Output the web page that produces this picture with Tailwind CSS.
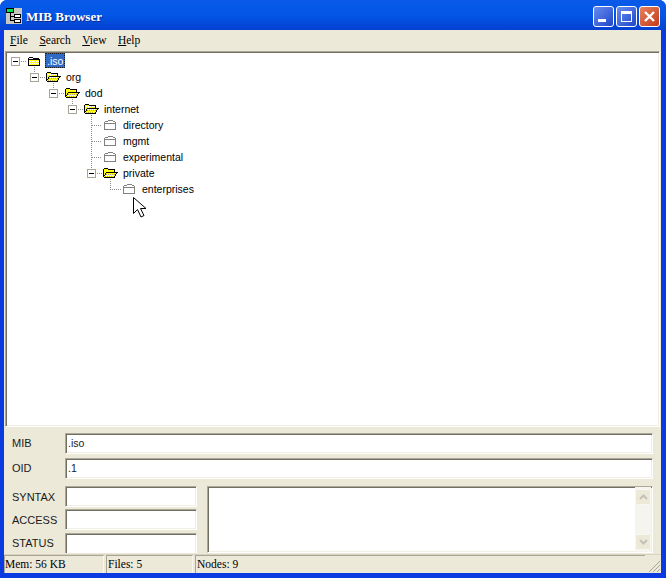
<!DOCTYPE html>
<html>
<head>
<meta charset="utf-8">
<script src="https://cdn.jsdelivr.net/npm/@tailwindcss/browser@4"></script>
</head>
<body class="bg-white">
<svg width="0" height="0" class="absolute">
  <defs>
    <symbol id="open" viewBox="0 0 15 11">
      <g shape-rendering="crispEdges">
        <path d="M1 1H5V2H12V4H1ZM1 4H14L11 9H1Z" fill="#ffff00"/>
        <g stroke="#fff" stroke-dasharray="1 1" fill="none">
          <path d="M2 2.5H11M3 4.5H14"/>
          <path d="M3 3.5H5M3 5.5H12M2 7.5H10" stroke-dashoffset="1"/>
          <path d="M3 6.5H12M2 8.5H10" stroke="#b8b050"/>
        </g>
        <path d="M.5 9V1.5L1.5 .5H4.5L5.5 1.5H11.5V3.5M.5 9.5H11L14 4.5H3.5L.5 9" fill="none" stroke="#000"/>
      </g>
    </symbol>
    <symbol id="closed" viewBox="0 0 12 9">
      <g shape-rendering="crispEdges">
        <rect x="1" y="2" width="10" height="6" fill="#ffff00"/>
        <g stroke="#fff" stroke-dasharray="1 1" fill="none">
          <path d="M1 3.5H11M1 5.5H11M1 7.5H11"/>
          <path d="M2 2.5H11M2 4.5H11M2 6.5H11"/>
        </g>
        <path d="M.5 8.5V1.5L1.5 .5H4.5L5.5 1.5H10.5L11.5 2.5V8.5ZM1 2.5H11" fill="none" stroke="#000"/>
      </g>
    </symbol>
    <symbol id="leaf" viewBox="0 0 12 11">
      <path d="M.5 9.5V2.5L1.5 1.5H3.5L4.5 .5H8.5L9.5 1.5H10.5L11.5 2.5V9.5ZM1 3.5H11" fill="#fff" stroke="#808080" shape-rendering="crispEdges"/>
    </symbol>
    <symbol id="minus" viewBox="0 0 9 9">
      <rect x=".5" y=".5" width="8" height="8" fill="#fff" stroke="#a8a498" shape-rendering="crispEdges"/>
      <path d="M2 4.5H7" stroke="#000" shape-rendering="crispEdges"/>
    </symbol>
  </defs>
</svg>

<div class="w-[666px] h-[578px] flex flex-col overflow-hidden rounded-t-[7px] bg-[#0a3be0] font-['Liberation_Sans',sans-serif] text-[11px] text-black">
  <!-- Title bar -->
  <div class="h-[30px] shrink-0 flex items-center pl-[6px] pr-[6px] bg-linear-to-b from-[#0a5ae8] via-[#0256e6] to-[#0440d0]">
    <svg width="16" height="16" viewBox="0 0 16 16" shape-rendering="crispEdges" class="mr-[4px] mt-[2px]">
      <rect width="16" height="16" fill="#c8c8c0"/>
      <rect x=".5" y=".5" width="7" height="4" fill="#00e050" stroke="#000"/>
      <path d="M4.5 5V12.5H8M4.5 8.5H8" stroke="#000" fill="none"/>
      <rect x="8.5" y="6.5" width="6" height="3" fill="#fff" stroke="#000"/>
      <rect x="8.5" y="11.5" width="6" height="3" fill="#fff" stroke="#000"/>
    </svg>
    <span class="font-['Liberation_Serif',serif] font-bold text-[13px] text-white mt-[3px] [text-shadow:1px_1px_0_#0a2a90]">MIB Browser</span>
    <div class="ml-auto flex gap-[2px] mt-[2px]">
      <div class="w-[21px] h-[21px] rounded-[3px] border border-white bg-linear-to-br from-[#6a8cf0] to-[#1f45c8] flex items-end pl-[4px] pb-[4px]">
        <div class="w-[8px] h-[3px] bg-white"></div>
      </div>
      <div class="w-[21px] h-[21px] rounded-[3px] border border-white bg-linear-to-br from-[#6a8cf0] to-[#1f45c8] flex items-center justify-center">
        <div class="w-[11px] h-[11px] border border-white border-t-[3px]"></div>
      </div>
      <div class="w-[21px] h-[21px] rounded-[3px] border border-white bg-linear-to-br from-[#e8805c] to-[#c03a18] flex items-center justify-center">
        <svg width="13" height="13" viewBox="0 0 13 13"><path d="M2 2L11 11M11 2L2 11" stroke="#fff" stroke-width="2.4"/></svg>
      </div>
    </div>
  </div>

  <div class="flex-1 min-h-0 ml-[4px] mb-[5px] mr-[5px] bg-[#ece9d8] flex flex-col">
    <!-- Menu -->
    <div class="h-[21px] shrink-0 flex items-center pl-[6px] gap-[11.5px] font-['Liberation_Serif',serif] text-[11.5px]">
      <span><u>F</u>ile</span>
      <span><u>S</u>earch</span>
      <span><u>V</u>iew</span>
      <span><u>H</u>elp</span>
    </div>

    <!-- Tree -->
    <div class="relative h-[376px] shrink-0 mx-px pl-px pt-[2px] bg-white border border-t-[#aca899] border-l-[#aca899] border-r-white border-b-white shadow-[inset_1px_1px_0_#716f64,inset_-1px_-1px_0_#f1efe2] text-[10.5px] leading-[15px]">
      <svg class="absolute left-[-6px] top-[-52px]" width="200" height="200" fill="none" stroke="#8c8c8c" stroke-dasharray="1 1" shape-rendering="crispEdges">
        <path d="M20.5 61.5H27M39.5 77.5H46M58.5 93.5H65M77.5 109.5H84M96.5 173.5H103"/>
        <path d="M34.5 67V72M53.5 83V88M72.5 99V104M91.5 115V168"/>
        <path d="M91.5 125.5H102M91.5 141.5H102M91.5 157.5H102"/>
        <path d="M110.5 179V189.5H121"/>
      </svg>
      <div class="relative flex items-center h-[15px] mb-px ml-[4px]">
        <svg width="9" height="9"><use href="#minus"/></svg>
        <svg width="12" height="9" class="ml-[8px]"><use href="#closed"/></svg>
        <span class="ml-[5px] px-[2px] self-start -mt-px h-[15px] leading-[16px] bg-[#316ac5] text-white outline-1 outline-dotted outline-[#1a1a1a] -outline-offset-1">.iso</span>
      </div>
      <div class="relative flex items-center h-[15px] mb-px ml-[23px]">
        <svg width="9" height="9"><use href="#minus"/></svg>
        <svg width="15" height="11" class="ml-[7px]"><use href="#open"/></svg>
        <span class="ml-[5px]">org</span>
      </div>
      <div class="relative flex items-center h-[15px] mb-px ml-[42px]">
        <svg width="9" height="9"><use href="#minus"/></svg>
        <svg width="15" height="11" class="ml-[7px]"><use href="#open"/></svg>
        <span class="ml-[5px]">dod</span>
      </div>
      <div class="relative flex items-center h-[15px] mb-px ml-[61px]">
        <svg width="9" height="9"><use href="#minus"/></svg>
        <svg width="15" height="11" class="ml-[7px]"><use href="#open"/></svg>
        <span class="ml-[5px]">internet</span>
      </div>
      <div class="relative flex items-center h-[15px] mb-px ml-[97px]">
        <svg width="12" height="11"><use href="#leaf"/></svg>
        <span class="ml-[7px]">directory</span>
      </div>
      <div class="relative flex items-center h-[15px] mb-px ml-[97px]">
        <svg width="12" height="11"><use href="#leaf"/></svg>
        <span class="ml-[7px]">mgmt</span>
      </div>
      <div class="relative flex items-center h-[15px] mb-px ml-[97px]">
        <svg width="12" height="11"><use href="#leaf"/></svg>
        <span class="ml-[7px]">experimental</span>
      </div>
      <div class="relative flex items-center h-[15px] mb-px ml-[80px]">
        <svg width="9" height="9"><use href="#minus"/></svg>
        <svg width="15" height="11" class="ml-[7px]"><use href="#open"/></svg>
        <span class="ml-[5px]">private</span>
      </div>
      <div class="relative flex items-center h-[15px] mb-px ml-[116px]">
        <svg width="12" height="11"><use href="#leaf"/></svg>
        <span class="ml-[7px]">enterprises</span>
      </div>
      <!-- mouse pointer -->
      <svg class="absolute left-[126px] top-[144px]" width="16" height="23" viewBox="0 0 16 23">
        <path d="M1.5 1.5V17.5L5.5 13.5L9 21L12 19.5L8.5 12.5H14Z" fill="#fff" stroke="#000" stroke-linejoin="round"/>
      </svg>
    </div>

    <!-- Fields -->
    <div class="flex-1 min-h-0 flex flex-col pl-[8px] pr-[8px] pt-[5px] text-[11px] text-[#1a1a1a]">
      <div class="flex items-center h-[22px]">
        <span class="w-[53px] pt-px">MIB</span>
        <div class="flex-1 h-[21px] bg-white border border-t-[#aca899] border-l-[#aca899] border-r-white border-b-white shadow-[inset_1px_1px_0_#716f64,inset_-1px_-1px_0_#f1efe2] pl-[2px] leading-[18px] text-[10.5px]">.iso</div>
      </div>
      <div class="flex items-center h-[22px] mt-[3px]">
        <span class="w-[53px] pt-px">OID</span>
        <div class="flex-1 h-[21px] bg-white border border-t-[#aca899] border-l-[#aca899] border-r-white border-b-white shadow-[inset_1px_1px_0_#716f64,inset_-1px_-1px_0_#f1efe2] pl-[2px] leading-[18px] text-[10.5px]">.1</div>
      </div>
      <div class="flex mt-[7px] gap-[10px]">
        <div class="w-[185px] flex flex-col gap-[2px]">
          <div class="flex items-center h-[21px]">
            <span class="w-[53px] pt-px">SYNTAX</span>
            <div class="flex-1 h-[21px] bg-white border border-t-[#aca899] border-l-[#aca899] border-r-white border-b-white shadow-[inset_1px_1px_0_#716f64,inset_-1px_-1px_0_#f1efe2]"></div>
          </div>
          <div class="flex items-center h-[21px]">
            <span class="w-[53px] pt-px">ACCESS</span>
            <div class="flex-1 h-[21px] bg-white border border-t-[#aca899] border-l-[#aca899] border-r-white border-b-white shadow-[inset_1px_1px_0_#716f64,inset_-1px_-1px_0_#f1efe2]"></div>
          </div>
          <div class="flex items-center h-[20px] mt-px">
            <span class="w-[53px] pt-px">STATUS</span>
            <div class="flex-1 h-[20px] bg-white border border-b-0 border-t-[#aca899] border-l-[#aca899] border-r-white shadow-[inset_1px_1px_0_#716f64,inset_-1px_0_0_#f1efe2]"></div>
          </div>
        </div>
        <div class="flex-1 h-[67px] bg-white border border-t-[#aca899] border-l-[#aca899] border-r-white border-b-white shadow-[inset_1px_1px_0_#716f64,inset_-1px_-1px_0_#f1efe2] flex justify-end pr-px">
          <div class="w-[16px] bg-[#f5f4ee] flex flex-col justify-between py-[2px]">
            <div class="h-[16px] bg-[#ece9d8] border border-[#f8f7f0] rounded-[2px] flex items-center justify-center">
              <svg width="9" height="6"><path d="M1 5L4.5 1.5L8 5" fill="none" stroke="#c4c2b8" stroke-width="2"/></svg>
            </div>
            <div class="h-[16px] bg-[#ece9d8] border border-[#f8f7f0] rounded-[2px] flex items-center justify-center">
              <svg width="9" height="6"><path d="M1 1L4.5 4.5L8 1" fill="none" stroke="#c4c2b8" stroke-width="2"/></svg>
            </div>
          </div>
        </div>
      </div>
    </div>

    <!-- Status bar -->
    <div class="h-[19px] shrink-0 flex gap-[2px] border-t border-[#d8d4c0] font-['Liberation_Serif',serif] text-[11.5px] leading-[17px]">
      <div class="w-[100px] border-t border-l border-[#a8a498] border-r border-r-[#f8f7f0]">Mem: 56 KB</div>
      <div class="w-[87px] pl-px border-t border-l border-[#a8a498] border-r border-r-[#f8f7f0]">Files: 5</div>
      <div class="flex-1 pl-px border-t border-l border-[#a8a498]">Nodes: 9</div>
      <svg width="14" height="14" class="self-end" stroke="#a8a498" fill="none">
        <path d="M13 2L2 13M13 6L6 13M13 10L10 13"/>
      </svg>
    </div>
  </div>
</div>
</body>
</html>
